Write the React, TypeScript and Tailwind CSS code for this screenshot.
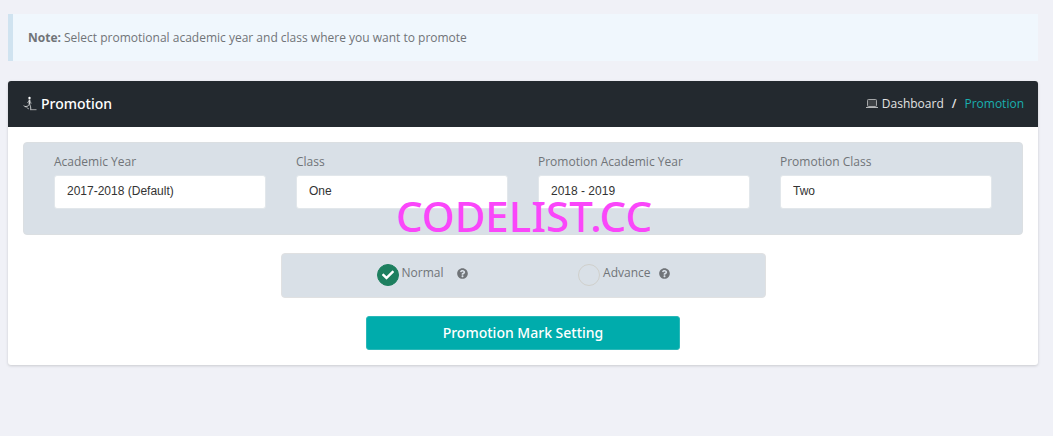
import { useState } from "react";
import { FaCheck, FaQuestionCircle } from "react-icons/fa";

const fields = [
  { id: "academic-year", label: "Academic Year", options: ["2017-2018 (Default)"] },
  { id: "class", label: "Class", options: ["One"] },
  { id: "promotion-academic-year", label: "Promotion Academic Year", options: ["2018 - 2019"] },
  { id: "promotion-class", label: "Promotion Class", options: ["Two"] },
];

const modes = [
  { id: "normal", label: "Normal", gap: "gap-3.5" },
  { id: "advance", label: "Advance", gap: "gap-2" },
];

function PromotionIcon() {
  return (
    <svg className="h-4 w-3.5 shrink-0 text-[#d5d7d8]" viewBox="0 0 14 16" fill="none" stroke="currentColor" aria-hidden="true">
      <circle cx="6.5" cy="2" r="1.2" fill="#fff" stroke="none" />
      <path d="M6.5 3.5v5" strokeWidth="1.7" />
      <path d="M6 4.8 4.3 7M7 5.3 8.4 7.5" strokeWidth="0.6" />
      <path d="M6 8.5 4.6 10.3 1.8 10.6M6.8 8.5 7.6 10.8l.2 2.7" strokeWidth="0.9" />
      <path d="M.5 9.6 3 11M3.5 11.5 6 13M7 13.7h6.5" strokeWidth="0.7" />
    </svg>
  );
}

function LaptopIcon() {
  return (
    <svg className="h-3 w-3 shrink-0" viewBox="0 0 12 12" fill="none" stroke="currentColor" aria-hidden="true">
      <rect x="1.5" y="1.5" width="9" height="7" rx="0.8" fill="#3d4145" stroke="#a5a7a9" />
      <path d="M0 9.5h12" stroke="#b5b7b9" />
    </svg>
  );
}

export default function App() {
  const [mode, setMode] = useState("normal");

  return (
    <div className="min-h-screen bg-[#f0f1f7] pt-3.5 pr-[15px] pl-2 font-['Open_Sans',sans-serif] text-xs text-[#707478]">
      <div className="border-l-5 border-[#d0e3f0] bg-[#f0f7fd] p-[15px] leading-[17px]">
        <strong className="font-bold">Note:</strong> Select promotional academic year and class where you want to promote
      </div>

      <main className="relative mt-5 rounded-[3px] bg-white shadow-[0_1px_3px_rgba(0,0,0,0.16)]">
        <header className="flex h-[46px] items-center justify-between rounded-t-[3px] bg-[#23292f] pr-3.5 pl-[15px]">
          <h1 className="flex items-center gap-1 font-['Noto_Sans',sans-serif] text-sm font-medium text-white">
            <PromotionIcon />
            Promotion
          </h1>
          <nav aria-label="Breadcrumb">
            <ol className="flex items-center text-[#e2e2e2]">
              <li>
                <a href="#dashboard" className="flex items-center gap-1">
                  <LaptopIcon />
                  Dashboard
                </a>
              </li>
              <li className="px-2 font-semibold" aria-hidden="true">/</li>
              <li className="text-[#1aafaf]" aria-current="page">Promotion</li>
            </ol>
          </nav>
        </header>

        <form className="flex flex-col items-center p-[15px]" onSubmit={(e) => e.preventDefault()}>
          <div className="grid w-full grid-cols-4 gap-[30px] rounded border border-[#dbdfe2] bg-[#d9e0e7] px-[30px] pt-2.5 pb-[25px]">
            {fields.map((field) => (
              <div key={field.id}>
                <label htmlFor={field.id} className="mb-1 block leading-[18px]">
                  {field.label}
                </label>
                <select
                  id={field.id}
                  className="block h-[34px] w-full appearance-none rounded-[3px] border border-[#e2e7eb] bg-white px-3 pb-0.5 font-['Liberation_Sans',Arial,sans-serif] text-xs text-[#333]"
                >
                  {field.options.map((option) => (
                    <option key={option}>{option}</option>
                  ))}
                </select>
              </div>
            ))}
          </div>

          <div
            role="radiogroup"
            aria-label="Promotion type"
            className="mt-[18px] flex w-[48.5%] justify-between rounded border border-[#e0e1e2] bg-[#d9e0e7] px-[95px] pt-2.5 pb-[11px]"
          >
            {modes.map(({ id, label, gap }) => (
              <div key={id} className={`flex items-start ${gap}`}>
                <label htmlFor={id} className="flex cursor-pointer items-start gap-[3px] leading-[18px]">
                  <span className="grid size-[22px] place-items-center">
                    <input
                      id={id}
                      type="radio"
                      name="mode"
                      checked={mode === id}
                      onChange={() => setMode(id)}
                      className="col-start-1 row-start-1 size-[22px] appearance-none rounded-full border border-[#d0d0cc] checked:border-[#1d7f5f] checked:bg-[#1d7f5f]"
                    />
                    {mode === id && (
                      <FaCheck className="pointer-events-none col-start-1 row-start-1 size-3 text-white" />
                    )}
                  </span>
                  {label}
                </label>
                <FaQuestionCircle className="mt-1 size-[11px]" aria-hidden="true" />
              </div>
            ))}
          </div>

          <button
            type="submit"
            className="mt-[18px] h-[34px] w-[31.4%] rounded-[3px] border border-[#2ab8b8] bg-[#00acac] font-['Noto_Sans',sans-serif] text-sm font-medium text-white"
          >
            Promotion Mark Setting
          </button>
        </form>

        <div className="pointer-events-none absolute inset-x-0 top-[106px] pl-0.5 text-center font-['Noto_Sans',sans-serif] text-[42px] leading-[58px] font-medium text-[#fa46fa]">
          CODELIST.CC
        </div>
      </main>
    </div>
  );
}
